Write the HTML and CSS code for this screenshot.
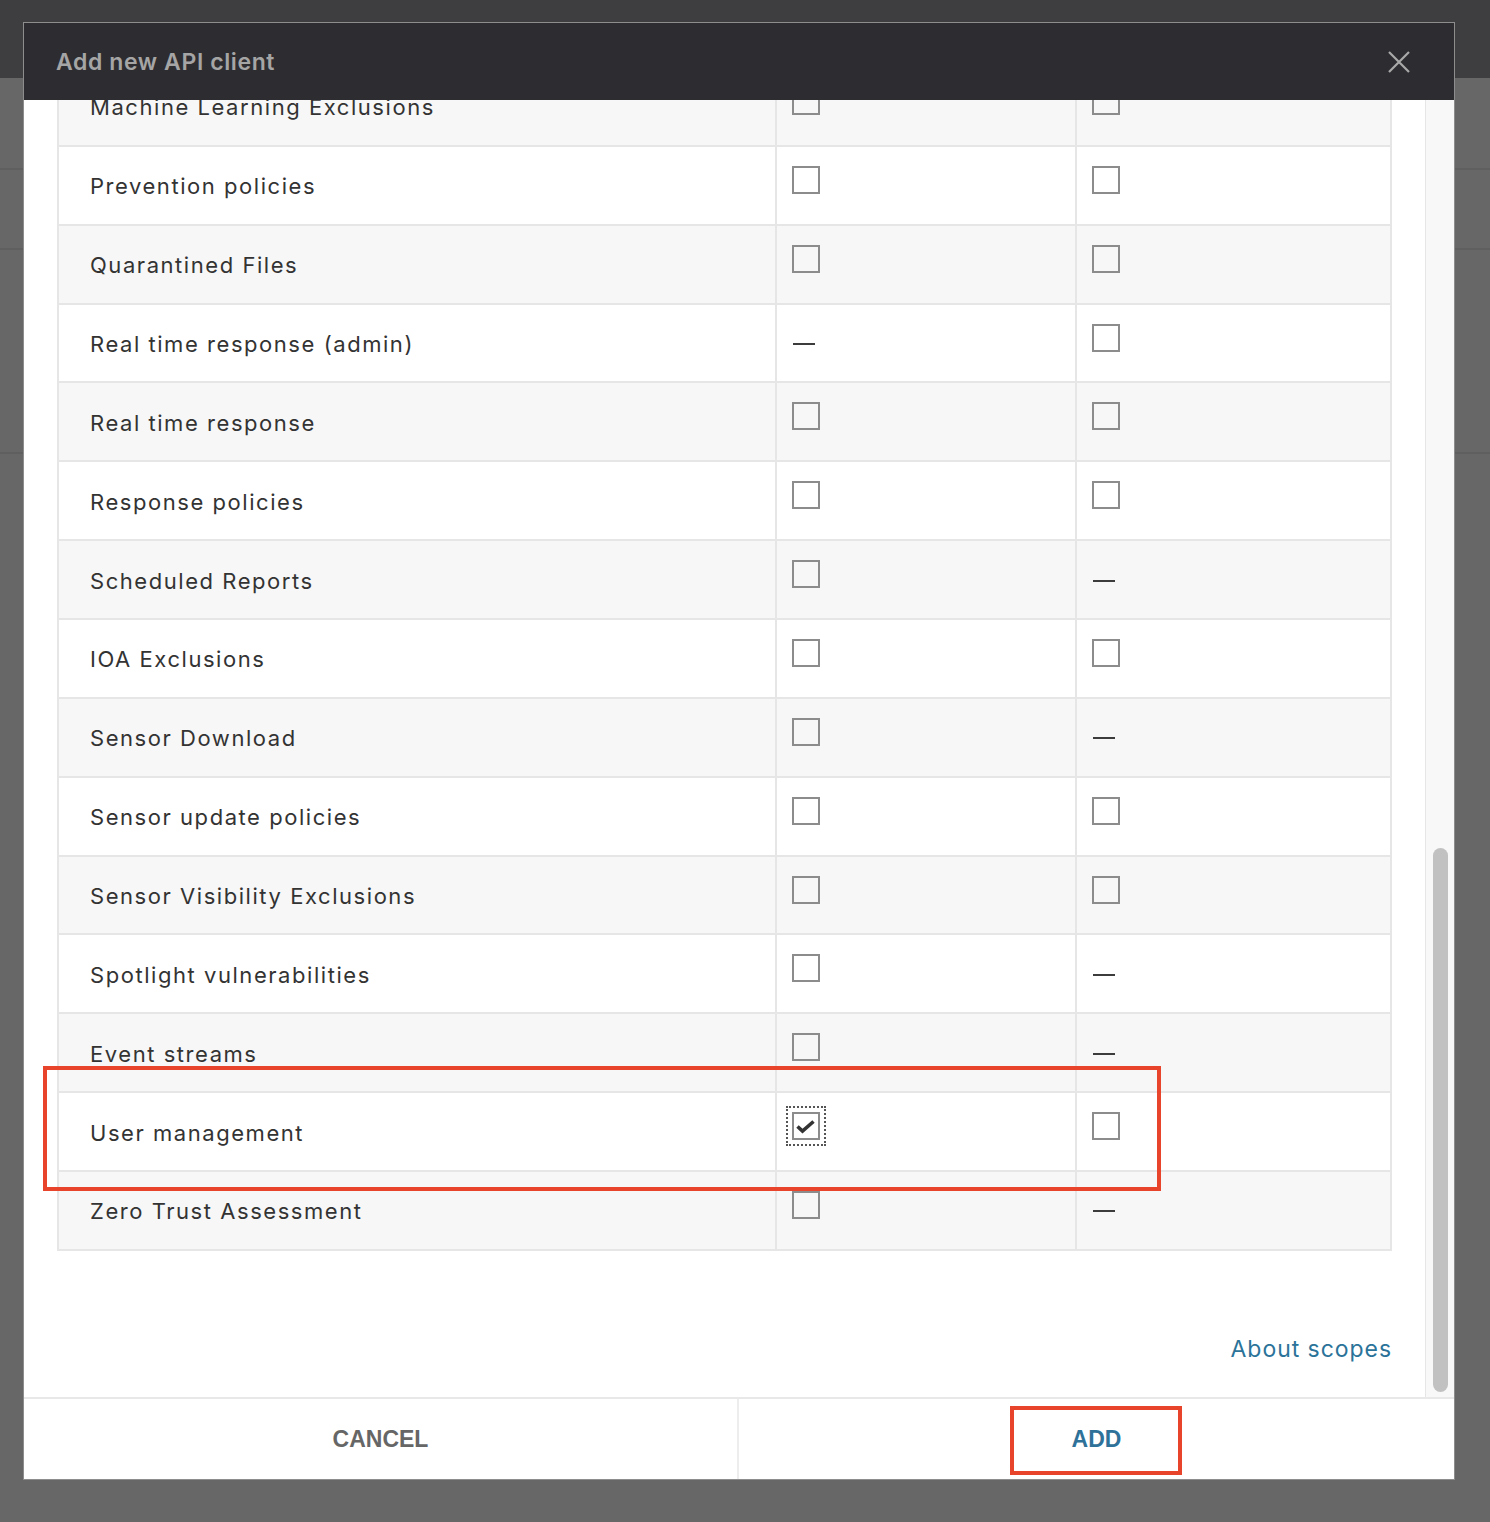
FILE: index.html
```html
<!DOCTYPE html>
<html lang="en">
<head>
<meta charset="utf-8">
<title>Add new API client</title>
<link rel="stylesheet" href="styles.css">
</head>
<body>
<div class="page">
  <div class="modal">
    <div class="modal-header">
      <h1 class="modal-title">Add new API client</h1>
      <button class="close-btn" aria-label="Close">
        <svg width="22" height="22" viewBox="0 0 22 22"><path d="M1 1 L21 21 M21 1 L1 21" stroke="#a9a9a9" stroke-width="2.2" fill="none"/></svg>
      </button>
    </div>
    <div class="modal-body">
      <div class="scroll-content">
        <div class="scope-table">
          <div class="row alt"><div class="cell name">Machine Learning Exclusions</div><div class="cell opt"><span class="cb"></span></div><div class="cell opt last"><span class="cb"></span></div></div>
          <div class="row"><div class="cell name">Prevention policies</div><div class="cell opt"><span class="cb"></span></div><div class="cell opt last"><span class="cb"></span></div></div>
          <div class="row alt"><div class="cell name">Quarantined Files</div><div class="cell opt"><span class="cb"></span></div><div class="cell opt last"><span class="cb"></span></div></div>
          <div class="row"><div class="cell name">Real time response (admin)</div><div class="cell opt dashcell"><span class="dash"></span></div><div class="cell opt last"><span class="cb"></span></div></div>
          <div class="row alt"><div class="cell name">Real time response</div><div class="cell opt"><span class="cb"></span></div><div class="cell opt last"><span class="cb"></span></div></div>
          <div class="row"><div class="cell name">Response policies</div><div class="cell opt"><span class="cb"></span></div><div class="cell opt last"><span class="cb"></span></div></div>
          <div class="row alt"><div class="cell name">Scheduled Reports</div><div class="cell opt"><span class="cb"></span></div><div class="cell opt last dashcell"><span class="dash"></span></div></div>
          <div class="row"><div class="cell name">IOA Exclusions</div><div class="cell opt"><span class="cb"></span></div><div class="cell opt last"><span class="cb"></span></div></div>
          <div class="row alt"><div class="cell name">Sensor Download</div><div class="cell opt"><span class="cb"></span></div><div class="cell opt last dashcell"><span class="dash"></span></div></div>
          <div class="row"><div class="cell name">Sensor update policies</div><div class="cell opt"><span class="cb"></span></div><div class="cell opt last"><span class="cb"></span></div></div>
          <div class="row alt"><div class="cell name">Sensor Visibility Exclusions</div><div class="cell opt"><span class="cb"></span></div><div class="cell opt last"><span class="cb"></span></div></div>
          <div class="row"><div class="cell name">Spotlight vulnerabilities</div><div class="cell opt"><span class="cb"></span></div><div class="cell opt last dashcell"><span class="dash"></span></div></div>
          <div class="row alt"><div class="cell name">Event streams</div><div class="cell opt"><span class="cb"></span></div><div class="cell opt last dashcell"><span class="dash"></span></div></div>
          <div class="row"><div class="cell name">User management</div><div class="cell opt"><span class="cb checked"><svg width="24" height="24" viewBox="0 0 24 24"><path d="M3.5 12.5 L8.5 17 L19.5 7.5" stroke="#333" stroke-width="3.6" fill="none" stroke-linejoin="miter"/></svg></span></div><div class="cell opt last"><span class="cb"></span></div></div>
          <div class="row alt"><div class="cell name">Zero Trust Assessment</div><div class="cell opt"><span class="cb"></span></div><div class="cell opt last dashcell"><span class="dash"></span></div></div>
        </div>
        <div class="about-row"><a class="about-link" href="#">About scopes</a></div>
      </div>
      <div class="scrollbar"><div class="thumb"></div></div>
    </div>
    <div class="modal-footer">
      <button class="footer-btn cancel">CANCEL</button>
      <button class="footer-btn add">ADD</button>
    </div>
  </div>
  <div class="highlight highlight-row"></div>
  <div class="highlight highlight-add"></div>
</div>
</body>
</html>
```

FILE: styles.css
```css
* { box-sizing: border-box; }

html, body {
  margin: 0;
  padding: 0;
}

body {
  width: 1490px;
  height: 1522px;
  overflow: hidden;
  font-family: Inter, "Noto Sans", sans-serif;
  background:
    linear-gradient(to bottom,
      #3e3e40 0px, #3e3e40 78px,
      #676767 78px, #676767 168px,
      #5f5f5f 168px, #5f5f5f 170px,
      #676767 170px, #676767 248px,
      #5f5f5f 248px, #5f5f5f 250px,
      #676767 250px, #676767 452px,
      #5f5f5f 452px, #5f5f5f 454px,
      #676767 454px, #676767 100%);
}

.page {
  position: relative;
  width: 1490px;
  height: 1522px;
  padding-top: 22px;
  padding-left: 23px;
}

.modal {
  width: 1432px;
  height: 1458px;
  border: 1px solid #8d8d8d;
  background: #ffffff;
  display: flex;
  flex-direction: column;
}

.modal-header {
  height: 77px;
  flex: 0 0 77px;
  background: #2d2c30;
  display: flex;
  align-items: center;
  justify-content: space-between;
  padding: 0 44px 0 32px;
}

.modal-title {
  margin: 0;
  font-family: Inter, "Noto Sans", sans-serif;
  font-weight: 600;
  font-size: 23px;
  color: #a5a5a5;
  letter-spacing: 0.6px;
}

.close-btn {
  background: none;
  border: 0;
  padding: 0;
  width: 22px;
  height: 22px;
  display: flex;
}

.modal-body {
  flex: 1 1 auto;
  display: flex;
  overflow: hidden;
  min-height: 0;
}

.scroll-content {
  flex: 1 1 auto;
  padding: 0 33px;
  overflow: hidden;
}

.scope-table {
  margin-top: -32px;
  border-left: 2px solid #e6e6e6;
  border-right: 2px solid #e6e6e6;
}

.row {
  display: grid;
  grid-template-columns: 718px 300px 1fr;
  height: 78.87px;
  border-bottom: 2px solid #e6e6e6;
  background: #ffffff;
}

.row.alt {
  background: #f7f7f7;
}

.cell {
  border-right: 2px solid #e6e6e6;
  display: flex;
}

.cell.last {
  border-right: 0;
}

.cell.name {
  align-items: center;
  padding-left: 31px;
  padding-top: 2px;
  font-size: 22px;
  letter-spacing: 1.55px;
  color: #333333;
}

.cell.opt {
  align-items: flex-start;
  padding-left: 15px;
  padding-top: 19px;
}

.cell.dashcell {
  align-items: center;
  padding-top: 0;
  padding-left: 16px;
}

.cb {
  width: 28px;
  height: 28px;
  border: 2px solid #8c8c8c;
  display: flex;
  align-items: center;
  justify-content: center;
}

.cb.checked {
  outline: 2px dotted #555555;
  outline-offset: 4px;
}

.dash {
  width: 22px;
  height: 2px;
  background: #3c3c3c;
  margin-top: 2px;
}

.about-row {
  display: flex;
  justify-content: flex-end;
  margin-top: 84px;
}

.about-link {
  font-size: 23px;
  letter-spacing: 0.95px;
  color: #2b7399;
  text-decoration: none;
}

.scrollbar {
  flex: 0 0 29px;
  background: #f8f8f8;
  border-left: 1px solid #e6e6e6;
  padding-top: 748px;
  padding-left: 7px;
}

.thumb {
  width: 15px;
  height: 544px;
  border-radius: 8px;
  background: #c1c1c1;
}

.modal-footer {
  flex: 0 0 82px;
  border-top: 2px solid #e8e8e8;
  display: grid;
  grid-template-columns: 715px 1fr;
}

.footer-btn {
  background: #ffffff;
  border: 0;
  padding-top: 2px;
  font-family: "Liberation Sans", Arial, sans-serif;
  font-weight: 700;
  font-size: 23px;
  letter-spacing: 0px;
  cursor: pointer;
}

.footer-btn.cancel {
  color: #666666;
  border-right: 2px solid #ededed;
}

.footer-btn.add {
  color: #2e7199;
}

.highlight {
  position: absolute;
  border: 4px solid #e8432b;
  pointer-events: none;
}

.highlight-row {
  left: 43px;
  top: 1066px;
  width: 1118px;
  height: 125px;
}

.highlight-add {
  left: 1010px;
  top: 1406px;
  width: 172px;
  height: 69px;
}
```
